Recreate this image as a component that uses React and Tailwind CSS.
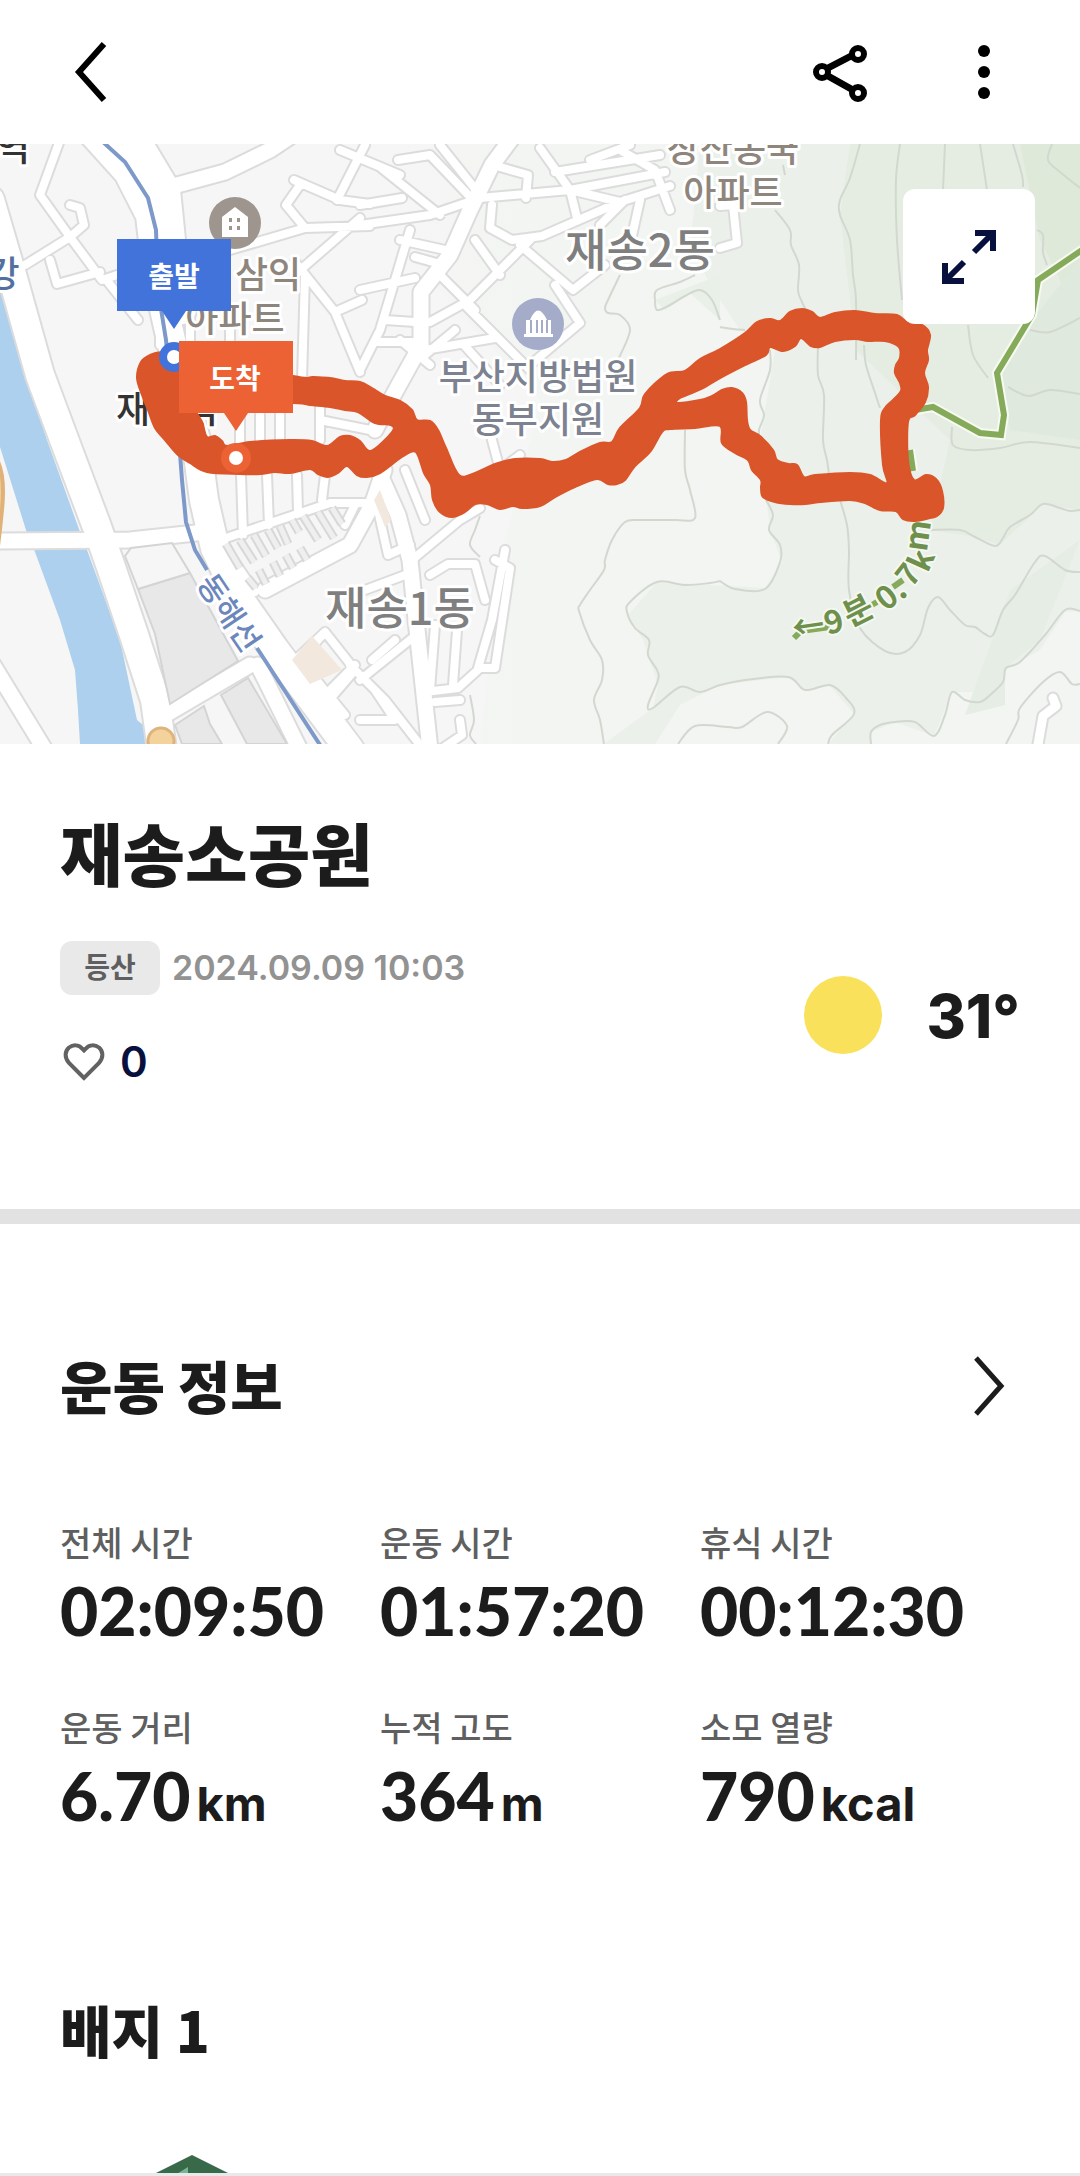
const stats = [
  { label: '전체 시간', value: '02:09:50' },
  { label: '운동 시간', value: '01:57:20' },
  { label: '휴식 시간', value: '00:12:30' },
  { label: '운동 거리', value: '6.70', unit: 'km' },
  { label: '누적 고도', value: '364', unit: 'm' },
  { label: '소모 열량', value: '790', unit: 'kcal' },
]

const kr = "font-['Inter','Noto_Sans_CJK_KR',sans-serif]"
const krOnly = "font-['Noto_Sans_CJK_KR',sans-serif]"

export default function App() {
  return (
    <div className={`${kr} w-full h-screen flex flex-col overflow-hidden bg-white text-[#1c1c1c]`}>
      <Header />
      <CourseMap />
      <Summary />
      <div className="h-[15px] shrink-0 bg-[#e2e2e2]" />
      <WorkoutInfo />
      <Badges />
    </div>
  )
}

function Header() {
  return (
    <header className="h-36 shrink-0 pl-14 pr-16 flex items-center justify-between">
      <button aria-label="뒤로" className="w-16 h-16 grid place-items-center">
        <svg width="64" height="64" viewBox="0 0 64 64" fill="none" stroke="#000" strokeWidth="6">
          <path d="M48 4 23 32l25 28" />
        </svg>
      </button>
      <div className="flex items-center gap-20">
        <button aria-label="공유" className="w-16 h-16 grid place-items-center">
          <svg width="64" height="64" viewBox="0 0 64 64" fill="none" stroke="#000" strokeWidth="6">
            <path d="M20 28 45 15M20 36l25 14" strokeWidth="7" />
            <circle cx="14" cy="32" r="6" fill="#fff" />
            <circle cx="50" cy="14" r="6" fill="#fff" />
            <circle cx="50" cy="53" r="6" fill="#fff" />
          </svg>
        </button>
        <button aria-label="더보기" className="w-16 h-16 grid place-items-center">
          <svg width="64" height="64" viewBox="0 0 64 64">
            <circle cx="32" cy="11" r="6" />
            <circle cx="32" cy="32" r="6" />
            <circle cx="32" cy="53" r="6" />
          </svg>
        </button>
      </div>
    </header>
  )
}

// "x y x y ..." lists, one per M, turned into smooth curves through every point
function smooth(lines, closed) {
  return lines.split('M').filter(Boolean).map(line => {
    const n = line.trim().split(/\s+/).map(Number)
    const p = []
    for (let i = 0; i < n.length; i += 2) p.push([n[i], n[i + 1]])
    const at = i => closed ? p[(i + p.length) % p.length] : p[Math.max(0, Math.min(p.length - 1, i))]
    let d = `M${p[0]}`
    for (let i = 0; i < (closed ? p.length : p.length - 1); i++) {
      const [a, b, c, e] = [at(i - 1), at(i), at(i + 1), at(i + 2)]
      d += `C${b[0] + (c[0] - a[0]) / 6} ${b[1] + (c[1] - a[1]) / 6} ${c[0] - (e[0] - b[0]) / 6} ${c[1] - (e[1] - b[1]) / 6} ${c[0]} ${c[1]}`
    }
    return closed ? d + 'Z' : d
  }).join('')
}

// road centre lines by width
const wideRoads = 'M-10 200 12 275 40 375 68 450 97 527 112 570 134 635 155 700 162 750M90 130 128 172 150 215 154 250 162 300 180 380 196 440 204 500 215 548 240 600 275 650 350 750M130 130 166 190 172 250 182 310'
const bigRoads = 'M0 541 130 540 205 532M166 188 225 172 270 150 300 130M518 130 492 165 470 210 450 255 421 292 421 345 395 392 375 430M378 470 398 515 410 560 416 620 430 750M265 590 350 545 372 505 384 470M-10 660 45 750M165 715 250 665M258 665 300 750'
const midRoads = 'M60 140 40 195 70 237 102 280 117 275M25 265 70 237 84 225 80 208 70 205M50 260 57 284 100 272M108 282 138 320M294 180 340 200 370 204M300 185 286 205 305 228 370 226M230 250 305 228M365 145 337 200M298 272 360 218M295 262 335 312 362 300M305 275 302 380M335 312 360 372M360 205 402 198M398 160 430 155 475 202M380 167 440 215M360 225 430 215 480 198 570 190 665 172M500 167 528 175 526 198M540 148 570 190 577 218M555 172 660 155M492 205 490 228 512 240 542 236 620 202 670 186M570 190 620 202M600 225 625 200M520 245 573 290 605 265M530 240 495 275 470 300 430 322M475 240 500 275M440 275 475 310M555 285 580 323 530 365M465 305 530 370M415 257 440 264M410 230 380 330 360 370M360 290 415 278M385 320 415 322M375 342 412 342M425 350 495 338M465 346 500 385M430 365 400 340M425 355 455 330M445 250 400 240M340 150 400 175M440 145 480 195M620 150 655 170 670 210M640 200 630 245M590 160 630 145M720 206 733 205 737 243 720 248'
const lowRoads = 'M412 560 460 520 480 508M430 575 448 564 475 564 485 600M378 510 388 555 410 545M365 590 405 575M505 550 492 620 478 668 495 668 510 568 495 560M435 625 430 690M457 630 453 685M425 692 458 688 480 668M435 702 460 700M360 680 416 635M350 665 385 700 420 745M372 660 395 640M375 690 395 720 360 720M460 720 462 735 440 750M405 470 425 520M290 665 325 632 355 670 325 705M355 665 315 705 350 750M325 632 300 660 345 715M208 475 210 528M241 475 243 535M267 475 269 525M297 475 298 512M325 475 322 500M220 540 330 503 365 503M225 548 255 592M492 440 500 470 520 455M345 525 355 505M240 415 240 445M260 415 260 445M280 415 280 445M320 405 320 440M320 420 370 430M160 325 160 345M190 320 190 345M230 320 230 340'

const contours = smooth('M860 144 850 178 840 200 840 215 850 240 853 275 856 300 856 360M900 144 896 180 897 240 902 300M945 144 943 190M980 144 987 190M1013 144 1022 175 1023 187M1052 144 1048 160 1060 172 1080 188M783 165 785 175M775 210 790 230 791 245 799 265 798 290 802 302 815 330M720 327 733 329 745 330M620 275 608 300 605 308 608 313 620 315 630 330 618 360M655 300 657 310 670 305 685 296 700 290 712 300 720 320M655 300 657 290 680 282 695 275M770 350 770 370 760 400 764 415 759 430 760 440M818 345 818 375 824 395 823 440 827 460 829 475M864 345 866 365 875 393 880 408M685 430 685 470 690 490 695 518 675 520 640 520 625 522 612 540 605 560 604 570 590 590 580 605 579 611 590 640 602 660 602 680 594 700 600 720 604 744M968 325 973 355 988 378M1037 230 1043 235 1043 252 1047 265M1030 330 1050 332 1080 318M1008 387 1028 396 1050 390 1080 394M952 427 953 445 970 450 1000 448 1030 442 1080 448M930 530 960 530 975 537 995 546 1003 538 1010 527 1030 515 1043 504 1060 508 1070 511 1080 510M840 500 847 525 849 550 849 590 860 628 885 651 905 652 920 635 928 608 938 597 950 610 965 625 975 627 985 634 993 635 1003 610 1015 595 1035 562 1045 556 1065 570 1080 572M1080 611 1065 610 1045 635 1020 662 1006 668 1003 682 990 695 980 702 965 700 952 692 945 715 934 736 915 722 895 722 880 725 871 732 871 744M1006 744 1018 720 1020 708 1043 682 1060 672 1072 684 1080 684M766 500 773 515 769 530 780 545 780 562 765 589 735 589 720 581M720 581 710 583 685 585 657 582 630 602 627 612 635 628 649 640 648 655 657 670 658 680 648 705 653 708 680 687 700 692 720 685 745 680 788 677 805 690 830 685 846 698 854 714 832 735 828 744M678 744 695 726 728 727 742 727 767 712 787 726 778 744M480 516 475 530 470 545 480 557M470 695 474 720 470 735 476 744')

// outline of the tracked route, with its two loops cut out
const route = smooth('M137 378 141 362 150 355 162 352 185 352 293 376 313 377 330 378 345 381 360 382 372 388 385 396 400 401 412 410 417 420 430 421 438 430 446 448 459 475 475 473 495 464 515 459 540 459 552 462 566 460 580 452 600 443 612 442 620 428 640 408 645 394 667 374 685 371 700 359 720 349 745 333 757 322 770 319 780 321 790 312 802 309 812 312 820 318 835 313 855 311 875 314 897 315 908 323 922 325 930 335 927 350 928 360 924 373 928 387 925 402 915 415 908 422 908 460 914 480 926 475 936 479 942 491 943 508 937 516 930 518 915 521 903 519 896 511 880 510 865 503 850 500 820 502 805 504 790 504 775 502 763 497 761 488 761 480 752 470 748 460 735 453 722 443 720 426 695 428 670 429 662 432 650 452 635 466 625 480 617 484 608 484 597 479 575 487 555 497 540 506 522 508 513 506 500 509 487 504 475 504 465 512 452 517 440 512 433 500 431 485 424 473 416 452 405 455 395 462 380 473 367 477 357 475 347 466 338 473 328 477 318 474 310 469 290 473 275 472 260 474 240 474 207 472 190 463 178 455 165 440 155 428 148 410 142 395M200 400 203 424 207 437 215 436 222 441 227 446 250 442 290 440 312 441 327 446 340 437 350 436 360 441 371 451 392 432 391 425 375 423 358 412 345 410 330 407 310 405 293 403M677 403 700 400 712 396 722 390 732 388 742 393 746 402 747 420 750 430 760 436 773 450 777 460 788 464 797 465 804 477 815 475 850 473 870 475 887 483 883 465 881 420 885 408 893 400 901 391 900 383 895 373 896 365 900 358 899 347 885 341 868 341 855 339 835 341 820 347 811 346 801 338 795 346 783 351 770 347 766 355 745 365 720 378 705 387 692 393 680 398', true)

function CourseMap() {
  return (
    <section className="relative h-[600px] shrink-0 overflow-hidden bg-[#f6f6f6]">
      <svg className="block w-full h-full" viewBox="0 144 1080 600" preserveAspectRatio="xMidYMid slice">
        <defs>
          <linearGradient id="slope" x1="0" x2="1">
            <stop offset="0" stopColor="#f6f6f6" />
            <stop offset="0.25" stopColor="#f2f5f1" />
            <stop offset="1" stopColor="#f2f5f1" />
          </linearGradient>
        </defs>
        <rect y="144" width="1080" height="600" fill="#f6f6f6" />
        <path d="M380 144H1080V744H480L500 560 540 400 400 250Z" fill="url(#slope)" />
        <path d="M700 144H1080V611L1065 612 1040 650 1005 670 1000 692 952 692 934 736 895 722 871 732V744H828L854 714 830 686 805 690 788 677 720 685 680 705 655 744H604L653 708 658 685 643 640 628 615 657 582 765 588 782 562 770 530 760 440 775 350 740 330 720 300 690 250Z" fill="#ebf1ea" />
        <path d="M850 144H1080V510L1043 504 1000 545 975 537 930 530 950 440 856 350 840 215Z" fill="#e5ede2" />
        <path d="M1020 144H1080V320L1040 240Z" fill="#dfe9d9" />
        <path d="M1080 260 1000 360 1010 430 1080 440Z" fill="#dfe9de" />
        <path d="M1080 540 1010 590 965 715 1005 705 1005 668 1040 640Z" fill="#e5ede4" />
        <path d="M655 300 720 275V320L690 293 665 310Z" fill="#e9f0e7" />
        <path d="M0 290 5 300 20 355 47 440 80 532 87 550 120 640 137 720 147 728 150 744H80L78 710 75 670 60 620 35 552 26 530 0 447Z" fill="#acd0ee" />
        <path d={contours} fill="none" stroke="#d2d8d0" strokeWidth="2" />

        <g fill="none" strokeLinejoin="round" strokeLinecap="round">
          <g stroke="#dcdcdc">
            <path d={wideRoads} strokeWidth="32" />
            <path d={bigRoads} strokeWidth="19" />
            <path d={midRoads} strokeWidth="12" />
            <path d={lowRoads} strokeWidth="12" />
            <path d="M1037 750 1043 716 1056 706 1053 698" strokeWidth="13" />
          </g>
          <g stroke="#fff">
            <path d={wideRoads} strokeWidth="28" />
            <path d={bigRoads} strokeWidth="15" />
            <path d={midRoads} strokeWidth="8" />
            <path d={lowRoads} strokeWidth="8" />
            <path d="M1037 750 1043 716 1056 706 1053 698" strokeWidth="9" />
          </g>
        </g>

        <g fill="#e8e8e8" stroke="#d4d4d4" strokeWidth="2">
          <path d="M138 589 190 573 238 661 170 704 155 634Z" />
          <path d="M221 695 248 678 287 744H247Z" />
          <path d="M175 725 204 706 210 724 222 744H182Z" />
          <path d="M125 556 131 548 172 543 190 573 138 589Z" fill="#f6f6f6" />
        </g>
        <path d="M292 660 312 636 342 670 310 684ZM374 500 380 490 391 520 385 527Z" fill="#f2e8de" />
        {/* parking rows */}
        <g stroke="#d8d8d8" strokeWidth="9">
          <path d="M226 544 240 568M240 540 254 562M254 535 266 556M268 530 278 548M280 526 288 544M292 520 299 532M303 516 318 540M318 512 334 538M332 508 342 524" />
          <path d="M248 578 256 588M259 570 266 584M273 562 280 576M286 555 293 568M300 548 307 560" />
        </g>
        <g stroke="#efefef" strokeWidth="5">
          <path d="M226 544 240 568M240 540 254 562M254 535 266 556M268 530 278 548M280 526 288 544M292 520 299 532M303 516 318 540M318 512 334 538M332 508 342 524" />
          <path d="M248 578 256 588M259 570 266 584M273 562 280 576M286 555 293 568M300 548 307 560" />
        </g>

        <path d="M103 142 125 162 148 198 156 230 158 290 166 340 172 400 179 440 182 480 186 522 195 550 207 570M257 648 322 748" fill="none" stroke="#7c99c9" strokeWidth="4" />
        <path d="M-6 455Q6 470 2 510T-6 575" fill="#f2cf98" stroke="#e0b27a" strokeWidth="4" />
        <circle cx="161" cy="741" r="13" fill="#f3d29b" stroke="#deb47c" strokeWidth="3" />

        {/* hiking trails */}
        <g fill="none" strokeLinejoin="miter">
          <path d="M1085 248 1038 280 1032 315 997 373 1004 415 1001 435 980 433 933 407 915 410M910 450 913 471" stroke="#f6faf2" strokeWidth="10" />
          <path d="M1085 248 1038 280 1032 315 997 373 1004 415 1001 435 980 433 933 407 915 410M910 450 913 471M794 638 801 631 830 627M870 606 877 602M893 587 903 580" stroke="#85aa5a" strokeWidth="6" />
        </g>

        <g className={`${krOnly} font-medium`} textAnchor="middle" stroke="#fff" strokeWidth="6" strokeLinejoin="round" paintOrder="stroke">
          <g fontSize="36" fill="#8e857d">
            <text x="268" y="288">삼익</text>
            <text x="235" y="332">아파트</text>
            <text x="733" y="162">장산동국</text>
            <text x="733" y="206">아파트</text>
          </g>
          <g fontSize="36" fill="#7d8290">
            <text x="538" y="390">부산지방법원</text>
            <text x="538" y="433">동부지원</text>
          </g>
          <g fontSize="45" fill="#7f7f7f">
            <text x="640" y="267">재송2동</text>
            <text x="400" y="625">재송1동</text>
          </g>
          <g fontSize="37" fill="#333">
            <text x="167" y="423">재송역</text>
            <text x="13" y="161">역</text>
          </g>
          <text x="3" y="287" fontSize="36" fill="#54709f">강</text>
          <text fontSize="31" fill="#6c87bb" transform="translate(220 619) rotate(56)">동해선</text>
          <g className="font-bold" fontSize="32" fill="#6f904c" stroke="#f4f8f1" strokeWidth="4" dominantBaseline="central">
            <text transform="translate(808 624) rotate(-8)">←</text>
            <text transform="translate(833 619) rotate(-15)">9</text>
            <text transform="translate(857 608) rotate(-27)">분</text>
            <text transform="translate(889 592) rotate(-38)">0.</text>
            <text transform="translate(906 573) rotate(-52)">7</text>
            <text transform="translate(919 559) rotate(-66)">k</text>
            <text transform="translate(915 535) rotate(-82)">m</text>
          </g>
        </g>

        <circle cx="235" cy="223" r="26" fill="#9e958e" />
        <path d="M222 237V217L235 207 248 217V237Z" fill="#fff" />
        <path d="M229 218h3v4h-3zM237 218h3v4h-3zM229 226h3v4h-3zM237 226h3v4h-3z" fill="#9e958e" />
        <circle cx="538" cy="324" r="26" fill="#a4acca" />
        <path d="M524 337v-3h2v-14h4q8-19 17 0h4v14h2v3Z" fill="#fff" />
        <path d="M531 320v13M537 320v13M542 320v13M547 320v13" stroke="#a4acca" strokeWidth="2" />

        <path d={route} fill="#da5529" fillRule="evenodd" stroke="#da5529" strokeWidth="2" strokeLinejoin="round" />

        <circle cx="174" cy="357" r="11" fill="#fff" stroke="#4173da" strokeWidth="8" />
        <path d="M117 239H231V311H186L174 329 162 311H117Z" fill="#4173da" />
        <circle cx="236" cy="458" r="11" fill="#fff" stroke="#ec6234" strokeWidth="8" />
        <path d="M179 341H293V413H248L236 431 224 413H179Z" fill="#ec6234" />
        <g className={`${krOnly} font-bold`} fontSize="28" fill="#fff" textAnchor="middle">
          <text x="174" y="287">출발</text>
          <text x="235" y="389">도착</text>
        </g>
      </svg>

      <button aria-label="지도 확대" className="absolute top-[45px] right-[45px] w-[132px] h-[135px] rounded-xl bg-white grid place-items-center">
        <svg width="64" height="64" viewBox="0 0 64 64" fill="none" stroke="#08103e" strokeWidth="6">
          <path d="M38 8h18v18M56 8 37 27M8 38v18h19M8 56l19-19" />
        </svg>
      </button>
    </section>
  )
}

function Summary() {
  return (
    <section className="h-[465px] shrink-0 px-15 pt-16 flex flex-col">
      <h1 className={`${krOnly} text-[68px] leading-[88px] font-black`}>재송소공원</h1>
      <div className="flex justify-between">
        <div className="pt-[45px]">
          <div className="flex items-center gap-3">
            <span className="w-[100px] h-[54px] rounded-xl bg-[#e9e9e9] text-[#5f5f5f] text-[28px] font-bold grid place-items-center">등산</span>
            <time className="text-[34px] leading-[54px] font-semibold text-[#929292]">2024.09.09 10:03</time>
          </div>
          <button className="mt-10 h-[54px] flex items-center gap-3 text-[#08103e]">
            <svg width="48" height="48" viewBox="0 0 48 48" fill="none" stroke="#626262" strokeWidth="4">
              <path d="M24 40 9 25C4 19 5 13 9 9.500c4-3 10-3 13 1l2 2 2-2c3-4 9-4 13-1 4 3.500 5 9.500 0 15.500Z" />
            </svg>
            <span className="text-[42px] leading-[54px] font-semibold">0</span>
          </button>
        </div>
        <div className="pt-[78px] flex items-start gap-11">
          <span className="w-[78px] h-[78px] mt-[2px] rounded-full bg-[#fae15c]" />
          <span className="text-[60px] leading-[84px] font-extrabold">31°</span>
        </div>
      </div>
    </section>
  )
}

function WorkoutInfo() {
  return (
    <section className="shrink-0 px-15 pt-[118px]">
      <div className="flex items-center justify-between h-[84px]">
        <h2 className={`${krOnly} text-[57px] leading-[84px] font-black`}>운동 정보</h2>
        <button aria-label="운동 정보 더보기" className="w-16 h-16 grid place-items-center">
          <svg width="64" height="64" viewBox="0 0 64 64" fill="none" stroke="#1c1c1c" strokeWidth="5">
            <path d="m20 6 25 28-25 28" />
          </svg>
        </button>
      </div>
      <dl className="grid grid-cols-3 gap-y-[45px] pt-[92px]">
        {stats.map(s => (
          <div key={s.label}>
            <dt className={`${krOnly} text-[34px] leading-[48px] font-medium text-[#5f5f5f]`}>{s.label}</dt>
            <dd className="h-[92px] font-['Lato',sans-serif] text-[66px] leading-[90px] font-black whitespace-nowrap">
              {s.value}
              {s.unit && <span className="ml-[6px] font-['Inter',sans-serif] text-[47px] leading-[60px] font-bold">{s.unit}</span>}
            </dd>
          </div>
        ))}
      </dl>
    </section>
  )
}

function Badges() {
  return (
    <section className="flex-1 min-h-0 overflow-hidden flex flex-col px-15 pt-36 border-b-3 border-[#e9e9e9]">
      <h2 className={`${krOnly} shrink-0 text-[56px] leading-[84px] font-black`}>배지 1</h2>
      <svg className="shrink-0 mt-[84px] ml-5" width="224" height="240" viewBox="0 0 224 240">
        <path d="M112 0 216 52V180L112 240 8 180V52Z" fill="#386a49" />
        <path d="M108 12V60H30Z" fill="#7bb394" />
      </svg>
    </section>
  )
}
